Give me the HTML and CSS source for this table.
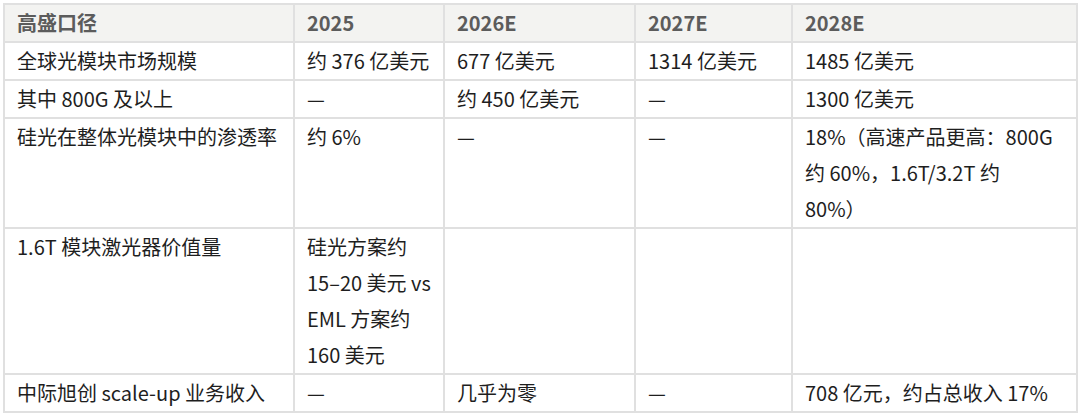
FILE: index.html
```html
<!DOCTYPE html>
<html lang="zh-CN">
<head>
<meta charset="utf-8">
<link rel="stylesheet" href="styles.css">
</head>
<body>
<table class="data">
  <colgroup>
    <col class="c1"><col class="c2"><col class="c3"><col class="c4"><col class="c5">
  </colgroup>
  <thead>
    <tr><th>高盛口径</th><th>2025</th><th>2026E</th><th>2027E</th><th>2028E</th></tr>
  </thead>
  <tbody>
    <tr><td>全球光模块市场规模</td><td>约 376 亿美元</td><td>677 亿美元</td><td>1314 亿美元</td><td>1485 亿美元</td></tr>
    <tr><td>其中 800G 及以上</td><td>—</td><td>约 450 亿美元</td><td>—</td><td>1300 亿美元</td></tr>
    <tr><td>硅光在整体光模块中的渗透率</td><td>约 6%</td><td>—</td><td>—</td><td>18%（高速产品更高：800G<br>约 60%，1.6T/3.2T 约<br>80%）</td></tr>
    <tr><td>1.6T 模块激光器价值量</td><td>硅光方案约<br>15–20 美元 vs<br>EML 方案约<br>160 美元</td><td></td><td></td><td></td></tr>
    <tr><td>中际旭创 scale-up 业务收入</td><td>—</td><td>几乎为零</td><td>—</td><td>708 亿元，约占总收入 17%</td></tr>
  </tbody>
</table>
</body>
</html>
```

FILE: styles.css
```css
html, body {
  margin: 0;
  padding: 0;
  background: #ffffff;
}
body {
  padding: 3px 0 0 3px;
  font-family: "Noto Sans CJK SC", "Noto Sans", sans-serif;
}
.data {
  border-collapse: collapse;
  table-layout: fixed;
  width: 1073px;
  font-size: 20px;
  line-height: 36px;
  color: #1e1e1e;
}
.c1 { width: 290px; }
.c2 { width: 150px; }
.c3 { width: 191px; }
.c4 { width: 157px; }
.c5 { width: 285px; }
.data th,
.data td {
  border: 2px solid #e0e0e0;
  padding: 0 12px;
  text-align: left;
  vertical-align: top;
  white-space: nowrap;
  overflow: hidden;
}
.data th {
  background: #f3f3f1;
  color: #5c5c5c;
  font-weight: 700;
}
.data td {
  font-weight: 400;
}
```
